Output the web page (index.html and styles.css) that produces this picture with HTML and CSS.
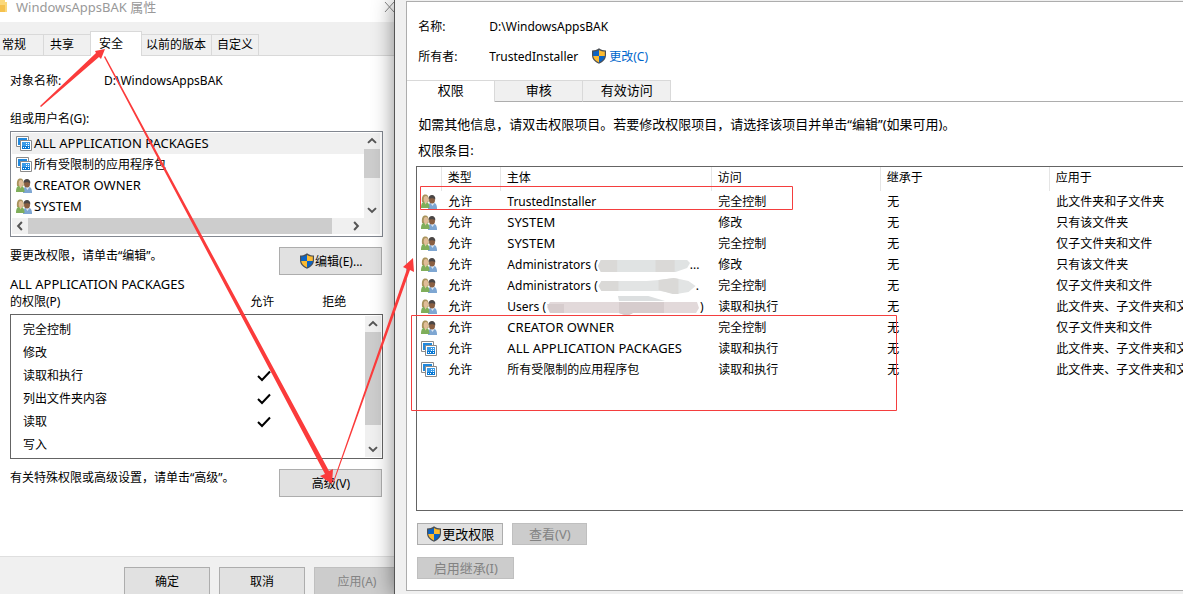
FILE: index.html
```html
<!DOCTYPE html>
<html lang="zh-CN">
<head>
    <meta charset="utf-8">
    <meta name="viewport" content="width=device-width, initial-scale=1.0">
    <title>WindowsAppsBAK 属性</title>
    <link rel="stylesheet" href="styles.css">
</head>
<body>
    <!-- 图标 -->
    <svg class="symbols" aria-hidden="true">
        <symbol id="shield" viewBox="0 0 16 16">
            <path d="M8 .3C6 2 3.600 2.500 1 2.500V7c0 4.300 2.800 6.900 7 8.800 4.200-1.900 7-4.500 7-8.800V2.500C12.400 2.500 10 2 8 .3z" fill="#4a4f55" />
            <path d="M8 1.900V8H2.200V3.600C4.300 3.500 6.200 3 8 1.900zM8 8h5.800c-.4 3-2.400 4.900-5.800 6.500z" fill="#0b63c4" />
            <path d="M8 1.900C9.800 3 11.700 3.500 13.800 3.600V8H8zM2.200 8H8v6.500C4.600 12.900 2.600 11 2.200 8z" fill="#fdbb30" />
        </symbol>
        <symbol id="users" viewBox="0 0 16 16">
            <path d="M7 15c0-4 1-6.500 4-6.500 3.500 0 5 2 5 6V15z" fill="#7ea6d2" />
            <path d="M9.500 9l2 3 2-3z" fill="#dbe7f4" />
            <ellipse cx="11" cy="6" rx="3" ry="3.500" fill="#8a5f42" />
            <path d="M7.500 5C7.400 2.200 9 1 11 1s3.600 1.500 3.300 4.500C13 4.500 10.500 3.800 7.500 5z" fill="#4b4645" />
            <path d="M0 14c0-4 1-6.500 4-6.500S8.500 10 8.500 14z" fill="#7fae5a" />
            <path d="M1 8C.5 3 1.500.5 4.300.5S8 3 7.500 8z" fill="#a8935c" />
            <ellipse cx="4.900" cy="5.300" rx="2.200" ry="3.200" fill="#e0bd98" />
            <path d="M3.300 8l1.300 2.500L6 8z" fill="#e4c3a0" />
        </symbol>
        <symbol id="package" viewBox="0 0 16 16">
            <path d="M.5.500h12v10H.5z" fill="#fff" stroke="#8a8a8a" />
            <path d="M2 2h9v7H2z" fill="#2188dc" />
            <path d="M4.500 4.500h11v10h-11z" fill="#fff" stroke="#8a8a8a" />
            <path d="M6 6h8v4H6z" fill="#3a9be8" />
            <path d="M6 10h8v3H6z" fill="#0878d4" />
            <path d="M7 11h1v1H7zM9 11h1v1H9zM12 11h1v1h-1zM10 7h1v1h-1zM12 7h1v1h-1zM10 9h1v1h-1zM12 9h1v1h-1z" fill="#fff" />
        </symbol>
        <symbol id="arrow" viewBox="0 0 8 8">
            <path d="M.8 5.500L4 2.500L7.200 5.500" fill="none" stroke="#555" stroke-width="1.600" />
        </symbol>
        <symbol id="check" viewBox="0 0 14 12">
            <path d="M1 6l4 4L13 1.500" fill="none" stroke="#000" stroke-width="2" />
        </symbol>
    </svg>

    <div class="desktop">
        <!-- 属性窗口 -->
        <section class="properties">
            <header class="titlebar">
                <svg class="folder" width="7" height="14" viewBox="0 0 7 14"><path d="M0 0h5v2h2v10H0z" fill="#fbd87a" /><path d="M0 5h5v7H0z" fill="#f5c14e" /></svg>
                <span class="title">WindowsAppsBAK 属性</span>
                <button class="close" aria-label="关闭"><svg width="10" height="10" viewBox="0 0 10 10"><path d="M1 0l9 10M10 0L1 10" stroke="#888" /></svg></button>
            </header>
            <nav class="tabs">
                <button class="tab general">常规</button>
                <button class="tab share">共享</button>
                <button class="tab security active">安全</button>
                <button class="tab previous">以前的版本</button>
                <button class="tab">自定义</button>
            </nav>
            <div class="properties-body">
                <div class="object"><span>对象名称:</span><span>D:\WindowsAppsBAK</span></div>
                <div class="list-label">组或用户名(G):</div>
                <div class="groups">
                    <ul class="group-list">
                        <li class="selected"><svg class="icon"><use href="#package" /></svg><span class="account">ALL APPLICATION PACKAGES</span></li>
                        <li><svg class="icon"><use href="#package" /></svg><span>所有受限制的应用程序包</span></li>
                        <li><svg class="icon"><use href="#users" /></svg><span class="account">CREATOR OWNER</span></li>
                        <li><svg class="icon"><use href="#users" /></svg><span class="account">SYSTEM</span></li>
                    </ul>
                    <div class="scroll vertical">
                        <svg class="arrow"><use href="#arrow" /></svg>
                        <div class="track"><div class="thumb short"></div></div>
                        <svg class="arrow down"><use href="#arrow" /></svg>
                    </div>
                    <div class="scroll horizontal">
                        <svg class="arrow left"><use href="#arrow" /></svg>
                        <div class="track"><div class="thumb wide"></div></div>
                        <svg class="arrow right"><use href="#arrow" /></svg>
                    </div>
                </div>
                <div class="action edit">
                    <span>要更改权限，请单击“编辑”。</span>
                    <button class="button"><svg class="icon"><use href="#shield" /></svg>编辑(E)...</button>
                </div>
                <div class="permission-head">
                    <div><span class="account">ALL APPLICATION PACKAGES</span><br>的权限(P)</div>
                    <span>允许</span>
                    <span>拒绝</span>
                </div>
                <div class="permissions">
                    <table class="permission-table">
                        <tr><td>完全控制</td><td></td></tr>
                        <tr><td>修改</td><td></td></tr>
                        <tr><td>读取和执行</td><td><svg class="check" role="img" aria-label="允许"><use href="#check" /></svg></td></tr>
                        <tr><td>列出文件夹内容</td><td><svg class="check" role="img" aria-label="允许"><use href="#check" /></svg></td></tr>
                        <tr><td>读取</td><td><svg class="check" role="img" aria-label="允许"><use href="#check" /></svg></td></tr>
                        <tr><td>写入</td><td></td></tr>
                    </table>
                    <div class="scroll vertical">
                        <svg class="arrow"><use href="#arrow" /></svg>
                        <div class="track"><div class="thumb tall"></div></div>
                        <svg class="arrow down"><use href="#arrow" /></svg>
                    </div>
                </div>
                <div class="action">
                    <span>有关特殊权限或高级设置，请单击“高级”。</span>
                    <button class="button">高级(V)</button>
                </div>
            </div>
            <footer class="footer">
                <button class="button">确定</button>
                <button class="button">取消</button>
                <button class="button" disabled>应用(A)</button>
            </footer>
        </section>

        <!-- 高级安全设置窗口 -->
        <section class="advanced">
            <div class="panel">
                <div class="info"><span>名称:</span><span>D:\WindowsAppsBAK</span></div>
                <div class="info">
                    <span>所有者:</span><span class="owner">TrustedInstaller</span>
                    <svg class="icon"><use href="#shield" /></svg><a href="#">更改(C)</a>
                </div>
                <nav class="advanced-tabs">
                    <button class="active">权限</button>
                    <button>审核</button>
                    <button>有效访问</button>
                </nav>
                <p class="hint">如需其他信息，请双击权限项目。若要修改权限项目，请选择该项目并单击“编辑”(如果可用)。</p>
                <p class="hint">权限条目:</p>
                <div class="entries">
                    <table class="entry-table">
                        <colgroup>
                            <col class="col-icon"><col class="col-type"><col class="col-name"><col class="col-access"><col class="col-access"><col>
                        </colgroup>
                        <thead>
                            <tr><th></th><th>类型</th><th>主体</th><th>访问</th><th>继承于</th><th>应用于</th></tr>
                        </thead>
                        <tbody>
                            <tr><td><svg class="icon"><use href="#users" /></svg></td><td>允许</td><td>TrustedInstaller</td><td>完全控制</td><td>无</td><td>此文件夹和子文件夹</td></tr>
                            <tr><td><svg class="icon"><use href="#users" /></svg></td><td>允许</td><td class="account">SYSTEM</td><td>修改</td><td>无</td><td>只有该文件夹</td></tr>
                            <tr><td><svg class="icon"><use href="#users" /></svg></td><td>允许</td><td class="account">SYSTEM</td><td>完全控制</td><td>无</td><td>仅子文件夹和文件</td></tr>
                            <tr>
                                <td><svg class="icon"><use href="#users" /></svg></td><td>允许</td>
                                <td>Administrators (<svg class="smudge" width="92" height="12" viewBox="0 0 96 12" preserveAspectRatio="none"><path d="M3 0h90l3 3-3 5-12 4H3L0 6z" fill="#e0e3e3" /><path d="M3 0h17v12H3L0 6zM60 0h20v12H60z" fill="#dad9d7" /></svg>...</td>
                                <td>修改</td><td>无</td><td>只有该文件夹</td>
                            </tr>
                            <tr>
                                <td><svg class="icon"><use href="#users" /></svg></td><td>允许</td>
                                <td>Administrators (<svg class="smudge" width="98" height="16" viewBox="0 0 97 16"><path d="M3 3h45l13-1 15-2 14 3 7 5-7 6-12 2-16-3H3L0 8z" fill="#e2e4e4" /><path d="M3 3h17v10H3L0 8zM60 2l15-2 5 1v15l-6 0-14-4z" fill="#dad9d7" /></svg>.</td>
                                <td>完全控制</td><td>无</td><td>仅子文件夹和文件</td>
                            </tr>
                            <tr>
                                <td><svg class="icon"><use href="#users" /></svg></td><td>允许</td>
                                <td>Users (<svg class="smudge" width="154" height="12" viewBox="0 0 152 12"><path d="M71-6l15-3 12 2 20 6H72z" fill="#dcdfe0" /><path d="M3 0h147l2 6-3 5H86l-6 3-8-3H3L0 5z" fill="#e2d9da" /><path d="M72 0h45v11H86l-6 3-8-3zM0 2h17v9H3z" fill="#d6cccd" /></svg>)</td>
                                <td>读取和执行</td><td>无</td><td>此文件夹、子文件夹和文件</td>
                            </tr>
                            <tr><td><svg class="icon"><use href="#users" /></svg></td><td>允许</td><td class="account">CREATOR OWNER</td><td>完全控制</td><td>无</td><td>仅子文件夹和文件</td></tr>
                            <tr><td><svg class="icon"><use href="#package" /></svg></td><td>允许</td><td class="account">ALL APPLICATION PACKAGES</td><td>读取和执行</td><td>无</td><td>此文件夹、子文件夹和文件</td></tr>
                            <tr><td><svg class="icon"><use href="#package" /></svg></td><td>允许</td><td>所有受限制的应用程序包</td><td>读取和执行</td><td>无</td><td>此文件夹、子文件夹和文件</td></tr>
                        </tbody>
                    </table>
                </div>
                <div class="panel-buttons">
                    <button class="button change"><svg class="icon"><use href="#shield" /></svg>更改权限</button>
                    <button class="button view" disabled>查看(V)</button>
                </div>
                <div class="panel-buttons">
                    <button class="button inherit" disabled>启用继承(I)</button>
                </div>
            </div>
        </section>

        <!-- 红色标注 -->
        <svg class="notes" width="1183" height="594" viewBox="0 0 1183 594" aria-hidden="true">
            <g fill="#fb3b3b">
                <path d="M40 106L96 53l-1-2 10-2-4 10-2-2L41 107z" />
                <path d="M104 57L325 474l-5 2 12 8 1-15-4 2L105 56z" />
                <path d="M333 482L407 269l-4-2 10-9 1 14-4-2L334 482z" />
            </g>
            <path d="M420.500 186.500h372v23h-372zM411.500 315.500h485v95h-485z" fill="none" stroke="#f43e3e" />
        </svg>
    </div>
</body>
</html>
```
FILE: styles.css
```css
/* 全局样式 */
* {
    box-sizing: border-box;
}

body {
    margin: 0;
    font-family: "Noto Sans", "Noto Sans CJK SC", sans-serif;
    font-size: 12px;
    line-height: 17px;
    color: #000;
    background-color: #f0f0f0;
    overflow: hidden;
}

button {
    font: inherit;
    color: inherit;
    padding: 0;
}

.symbols {
    display: none;
}

.icon {
    flex: none;
    width: 16px;
    height: 16px;
}

.account {
    font-size: 13px;
}

.desktop {
    position: relative;
    display: grid;
    grid-template-columns: minmax(0, 1fr) minmax(0, 2fr);
    height: 100vh;
}

/* 属性窗口 */
.properties {
    display: flex;
    flex-direction: column;
    overflow: hidden;
    background-color: #fff;
}

.titlebar {
    display: flex;
    flex: none;
    height: 22px;
    color: #999;
    font-size: 13px;
    line-height: 14px;
}

.title {
    flex: 1;
    margin-left: 9px;
}

.close {
    width: 10px;
    height: 12px;
    border: none;
    background: none;
}

.tabs {
    display: flex;
    align-items: flex-end;
    flex: none;
    height: 34px;
    background-color: #f0f0f0;
    box-shadow: inset 0 -1px #d9d9d9;
}

.tab {
    height: 22px;
    padding: 0 5px 2px;
    border: 1px solid #d9d9d9;
    border-left: none;
    background-color: #f0f0f0;
}

    .tab.general {
        padding: 0 17px 2px 2px;
    }

    .tab.share {
        padding: 0 16px 2px 6px;
        border-right: none;
    }

    .tab.security {
        height: 25px;
        padding: 0 18px 2px 8px;
        border-left: 1px solid #d9d9d9;
        border-bottom: none;
        background-color: #fff;
    }

    .tab.previous {
        padding: 0 5px 2px 4px;
    }

.properties-body {
    flex: 1;
    padding: 16px 11px 0 10px;
}

.object {
    display: flex;
}

    .object span:first-child {
        width: 94px;
    }

.list-label {
    margin: 21px 0 4px;
}

.groups {
    display: grid;
    grid-template-columns: 1fr 16px;
    padding: 1px 2px 2px 1px;
    border: 1px solid #828790;
}

.group-list {
    margin: 0;
    padding: 0 0 1px;
    list-style: none;
}

    .group-list li {
        display: flex;
        align-items: center;
        height: 21px;
        gap: 2px;
        padding-left: 4px;
    }

        .group-list li.selected {
            background-color: #f0f0f0;
        }

/* 滚动条 */
.scroll {
    display: flex;
    background-color: #f0f0f0;
}

.vertical {
    flex-direction: column;
    width: 16px;
}

.horizontal {
    grid-column: 1 / 3;
    height: 16px;
    padding-right: 16px;
}

.track {
    flex: 1;
}

.arrow {
    flex: none;
    width: 16px;
    height: 16px;
    padding: 3px;
}

.down {
    transform: rotate(180deg);
}

.left {
    transform: rotate(-90deg);
}

.right {
    transform: rotate(90deg);
}

.thumb {
    background-color: #cdcdcd;
}

.short {
    height: 29px;
}

.tall {
    height: 93px;
}

.wide {
    width: 95%;
    height: 16px;
}

/* 按钮样式 */
.button {
    display: flex;
    align-items: center;
    justify-content: center;
    height: 28px;
    border: 1px solid #adadad;
    background-color: #e1e1e1;
}

    .button:disabled {
        border-color: #bfbfbf;
        background-color: #ccc;
        color: #838383;
    }

.action {
    display: flex;
    justify-content: space-between;
    margin: 10px 1px 0 0;
}

    .action .button {
        width: 103px;
    }

.permission-head {
    display: grid;
    grid-template-columns: 1fr 72px 72px;
    align-items: end;
    margin-top: 1px;
    padding-right: 13px;
}

    .permission-head > span {
        text-align: center;
    }

.permissions {
    display: flex;
    margin-top: 4px;
    padding: 1px;
    border: 1px solid #646464;
}

.permission-table {
    flex: 1;
    margin: 2px 0 1px;
    border-collapse: collapse;
}

    .permission-table td {
        height: 23px;
        padding: 0 0 0 11px;
    }

        .permission-table td:last-child {
            width: 108px;
            padding: 0;
        }

.check {
    display: block;
    width: 14px;
    height: 12px;
}

.footer {
    display: flex;
    flex: none;
    gap: 9px;
    height: 38px;
    padding: 10px 0 0 124px;
    border-top: 1px solid #dfdfdf;
    background-color: #f0f0f0;
}

    .footer .button {
        flex: none;
        width: 86px;
    }

/* 高级安全设置窗口 */
.advanced {
    display: flex;
    padding: 1px 0 3px 11px;
    border-left: 1px solid #555;
    background-color: #f0f0f0;
    box-shadow: 0 0 20px rgba(0, 0, 0, 0.45);
}

.panel {
    display: flex;
    flex: 1;
    flex-direction: column;
    min-width: 0;
    padding-top: 9px;
    border: 1px solid #adadad;
    border-right: none;
    background-color: #fff;
}

.info {
    display: flex;
    align-items: center;
    height: 30px;
    padding-left: 11px;
}

    .info span:first-child {
        width: 71px;
    }

    .info .owner {
        margin-right: 13px;
    }

    .info a {
        margin-left: 2px;
        color: #0066cc;
        text-decoration: none;
    }

.advanced-tabs {
    display: flex;
    margin-top: 9px;
    box-shadow: inset 0 -1px #adadad;
}

    .advanced-tabs button {
        width: 88px;
        height: 22px;
        padding-bottom: 2px;
        border: 1px solid #d9d9d9;
        border-left: none;
        border-bottom-color: #adadad;
        background-color: #f0f0f0;
        font-size: 13px;
    }

        .advanced-tabs button.active {
            border-bottom: none;
            background-color: #fff;
        }

.hint {
    height: 17px;
    margin: 14px 0 0 11px;
    font-size: 13px;
    white-space: nowrap;
}

    .hint + .hint {
        margin: 9px 0 7px 11px;
    }

.entries {
    flex: 1;
    margin-left: 9px;
    border: 1px solid #646464;
    border-right: none;
    overflow: hidden;
}

.entry-table {
    width: 100%;
    table-layout: fixed;
    border-collapse: collapse;
}

    .entry-table th,
    .entry-table td {
        height: 21px;
        padding: 0 0 0 7px;
        text-align: left;
        font-weight: normal;
        white-space: nowrap;
        overflow: hidden;
    }

    .entry-table th {
        height: 24px;
        padding: 0 0 3px 6px;
        border-left: 1px solid #e5e5e5;
    }

    .entry-table th:first-child {
        border-left: none;
    }

    .entry-table td:first-child {
        padding-left: 4px;
    }

    .entry-table .icon {
        display: block;
    }

.col-icon {
    width: 24px;
}

.col-type {
    width: 59px;
}

.col-name {
    width: 211px;
}

.col-access {
    width: 169px;
}

.smudge {
    overflow: visible;
    vertical-align: middle;
}

.panel-buttons {
    display: flex;
    gap: 9px;
    margin: 12px 0 0 10px;
    font-size: 13px;
}

    .panel-buttons:last-child {
        margin-bottom: 11px;
    }

    .panel-buttons .button {
        height: 22px;
    }

.change {
    width: 86px;
}

.view {
    width: 75px;
}

.inherit {
    width: 97px;
}

/* 红色标注 */
.notes {
    position: absolute;
    top: 0;
    left: 0;
    pointer-events: none;
}
```
